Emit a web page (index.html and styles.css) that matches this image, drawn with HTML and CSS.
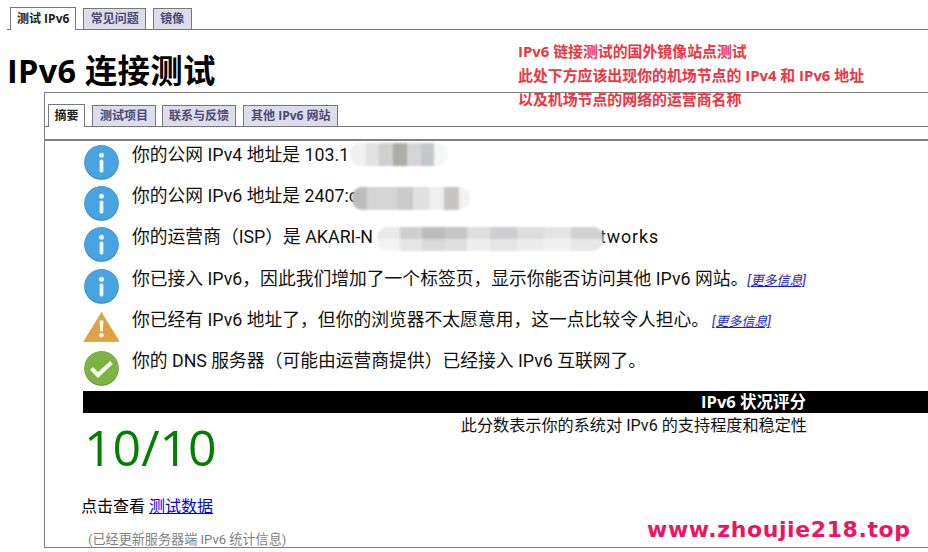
FILE: index.html
```html
<!DOCTYPE html>
<html lang="zh-CN">
<head>
<meta charset="utf-8">
<title>IPv6 连接测试</title>
<link rel="stylesheet" href="styles.css">
</head>
<body>
<svg class="defs" width="0" height="0" aria-hidden="true">
  <symbol id="info" viewBox="0 0 35 35">
    <circle cx="17.5" cy="17.5" r="17.3" fill="#2f7fb5"/>
    <circle cx="17.5" cy="17" r="16.8" fill="#48a3e1"/>
    <circle cx="17.5" cy="10.2" r="2.5" fill="#eef6fc"/>
    <rect x="15.6" y="14.6" width="3.8" height="13" rx="1.6" fill="#eef6fc"/>
  </symbol>
  <symbol id="warn" viewBox="0 0 35 30">
    <path d="M17.5 0 L35 28.5 L35 30 L0 30 L0 28.5 Z" fill="#dba344"/>
    <path d="M0 28.9 H35 V30 H0 Z" fill="#b5b09f"/>
    <path d="M15.4 8.5 H19.6 L18.6 19.5 H16.4 Z" fill="#fdf8ee"/>
    <circle cx="17.5" cy="23.3" r="2.3" fill="#fdf8ee"/>
  </symbol>
  <symbol id="ok" viewBox="0 0 35 35">
    <circle cx="17.5" cy="17.5" r="17.3" fill="#5f8f32"/>
    <circle cx="17.5" cy="17" r="16.8" fill="#7db343"/>
    <path d="M7.5 17.5 L14 24 L27.5 11.5" fill="none" stroke="#f4f8ee" stroke-width="4.2"/>
  </symbol>
</svg>

<nav class="tabs tabs-outer">
  <a class="tab tab-active">测试 IPv6</a>
  <a class="tab">常见问题</a>
  <a class="tab">镜像</a>
</nav>

<h1 class="title">IPv6 连接测试</h1>

<p class="note">IPv6 链接测试的国外镜像站点测试<br>此处下方应该出现你的机场节点的 IPv4 和 IPv6 地址<br>以及机场节点的网络的运营商名称</p>

<section class="panel">
  <nav class="tabs tabs-inner">
    <a class="tab tab-active">摘要</a>
    <a class="tab">测试项目</a>
    <a class="tab">联系与反馈</a>
    <a class="tab">其他 IPv6 网站</a>
  </nav>

  <div class="results">
    <div class="row">
      <svg class="icon"><use href="#info"/></svg>
      <p class="msg">你的公网 IPv4 地址是 103.1</p>
    </div>
    <div class="row">
      <svg class="icon"><use href="#info"/></svg>
      <p class="msg">你的公网 IPv6 地址是 2407:c</p>
    </div>
    <div class="row">
      <svg class="icon"><use href="#info"/></svg>
      <p class="msg">你的运营商（ISP）是 AKARI-N<span class="redacted"></span><span class="wide">tworks</span></p>
    </div>
    <div class="row">
      <svg class="icon"><use href="#info"/></svg>
      <p class="msg">你已接入 IPv6，因此我们增加了一个标签页，显示你能否访问其他 IPv6 网站。<a class="more more-a">[更多信息]</a></p>
    </div>
    <div class="row">
      <svg class="icon icon-warn"><use href="#warn"/></svg>
      <p class="msg">你已经有 IPv6 地址了，但你的浏览器不太愿意用，这一点比较令人担心。<a class="more more-b">[更多信息]</a></p>
    </div>
    <div class="row">
      <svg class="icon"><use href="#ok"/></svg>
      <p class="msg">你的 DNS 服务器（可能由运营商提供）已经接入 IPv6 互联网了。</p>
    </div>
  </div>

  <div class="score-bar">IPv6 状况评分</div>
  <div class="score-body">
    <div class="score">10/10</div>
    <p class="score-note">此分数表示你的系统对 IPv6 的支持程度和稳定性</p>
  </div>
  <p class="data-line">点击查看 <a class="data-link">测试数据</a></p>
  <p class="stats">(已经更新服务器端 IPv6 统计信息)</p>

  <div class="mosaic mosaic-1"></div>
  <div class="mosaic mosaic-2"></div>
  <div class="mosaic mosaic-3"></div>
</section>

<div class="watermark">www.zhoujie218.top</div>
</body>
</html>
```
FILE: styles.css
```css
html, body {
  margin: 0;
  height: 552px;
  overflow: hidden;
  background: #fff;
}
body {
  position: relative;
  padding-top: 7px;
  box-sizing: border-box;
  font-family: "Roboto", "Noto Sans CJK SC", sans-serif;
  color: #111;
}
.defs { position: absolute; }
p { margin: 0; }

.tabs {
  display: flex;
  align-items: flex-end;
  border-bottom: 1px solid #77777f;
  font-family: "Open Sans", "Noto Sans CJK SC", sans-serif;
}
.tabs-outer {
  height: 22px;
  margin-left: 7px;
  padding-left: 3px;
  gap: 7px;
}
.tabs-inner {
  height: 22px;
  margin-top: 11px;
  padding-left: 3px;
  gap: 7px;
}
.tab {
  display: block;
  box-sizing: border-box;
  height: 21px;
  padding: 0 6.3px;
  border: 1px solid #77777f;
  border-bottom: 0;
  background: #dcdcea;
  color: #4a4a72;
  font-size: 12px;
  font-weight: 700;
  line-height: 20px;
  white-space: nowrap;
}
.tabs-outer .tab-active { padding: 0 6px; }
.tabs-inner .tab { padding: 0 7px; }
.tabs-inner .tab-active { padding: 0 5.5px; }
.tabs-inner .tab:nth-child(3) { margin-left: -1px; padding: 0 6px; }
.tab-active {
  height: 23px;
  margin-bottom: -1px;
  background: #fff;
  color: #222;
  line-height: 22px;
}

.title {
  margin: 18px 0 0 7px;
  height: 44px;
  font-family: "Open Sans", "Noto Sans CJK SC", sans-serif;
  font-size: 32.4px;
  font-weight: 700;
  letter-spacing: 0.3px;
  line-height: 44px;
  color: #000;
}

.note {
  position: absolute;
  left: 518px;
  top: 39px;
  z-index: 2;
  font-family: "Open Sans", "Noto Sans CJK SC", sans-serif;
  font-size: 14.9px;
  font-weight: 700;
  line-height: 24px;
  color: #f2333f;
}

.panel {
  position: relative;
  box-sizing: border-box;
  height: 456px;
  margin: 0 -1px 0 44px;
  border: 1px solid #808080;
}
.results {
  margin-top: 12px;
  border-top: 2px solid #808080;
  padding-left: 39px;
}
.row {
  display: flex;
  gap: 13px;
  height: 41.2px;
}
.icon {
  flex: none;
  width: 35px;
  height: 35px;
  margin-top: 4px;
}
.icon-warn { height: 30px; margin-top: 6px; }
.msg {
  margin-top: 2px;
  font-size: 17.8px;
  line-height: 24px;
  white-space: nowrap;
}
.redacted {
  display: inline-block;
  width: 227px;
}
.wide { letter-spacing: 0.9px; }
.more {
  background: #fdfbe4;
  color: #1a1ae0;
  font-size: 13px;
  font-style: italic;
  text-decoration: underline;
}
.more-a { margin-left: -1px; }
.more-b { margin-left: 3px; }

.score-bar {
  box-sizing: border-box;
  height: 22px;
  margin: 3px 0 0 38px;
  padding-right: 122px;
  background: #000;
  color: #fff;
  font-family: "Open Sans", "Noto Sans CJK SC", sans-serif;
  font-size: 16.5px;
  font-weight: 700;
  line-height: 22px;
  text-align: right;
}
.score-body {
  display: flex;
  justify-content: space-between;
  margin-left: 39px;
  height: 69px;
  padding-right: 121px;
}
.score {
  font-family: "Open Sans", sans-serif;
  font-size: 50px;
  line-height: 68px;
  color: #008000;
}
.score-note {
  font-size: 16.15px;
  line-height: 26px;
}
.data-line {
  margin: 13px 0 0 36px;
  font-size: 16px;
  line-height: 24px;
  color: #000;
}
.data-link {
  color: #0000ee;
  text-decoration: underline;
}
.stats {
  margin: 11px 0 0 43px;
  font-size: 13.1px;
  line-height: 20px;
  color: #808080;
}

.mosaic {
  position: absolute;
  border-radius: 10px;
  filter: blur(1px);
}
.mosaic-1 {
  left: 305px;
  top: 50px;
  width: 98px;
  height: 23px;
  background: linear-gradient(90deg, #f0f0f0 0 16%, #e2e2e2 16% 30%, #cfcfcf 30% 44%, #adada8 44% 58%, #d4d4d4 58% 72%, #c2c8ca 72% 86%, #f6f6f6 86%);
}
.mosaic-2 {
  left: 307px;
  top: 94px;
  width: 118px;
  height: 23px;
  background: linear-gradient(90deg, #bdbdbd 0 13%, #d4d4d4 13% 39%, #cacaca 39% 52%, #e0e0e0 52% 65%, #eeeeef 65% 78%, #c6c5c3 78% 91%, #f2f2f2 91%);
}
.mosaic-3 {
  left: 332px;
  top: 134px;
  width: 226px;
  height: 24px;
  background:
    linear-gradient(180deg, rgba(255,255,255,0) 50%, rgba(255,255,255,.45) 50%),
    linear-gradient(90deg, #eaeaea 0 10%, #cfcfcf 10% 20%, #bcbcbc 20% 30%, #c6c6c6 30% 40%, #dedede 40% 50%, #cfcfd2 50% 62%, #dcdcdc 62% 74%, #e4e4e4 74% 86%, #d2d2d2 86%);
}

.watermark {
  position: absolute;
  left: 647px;
  top: 515px;
  z-index: 2;
  font-family: "DejaVu Sans", sans-serif;
  font-size: 22px;
  font-weight: 700;
  line-height: 30px;
  letter-spacing: 0.6px;
  color: #f0135f;
  white-space: nowrap;
}
```
